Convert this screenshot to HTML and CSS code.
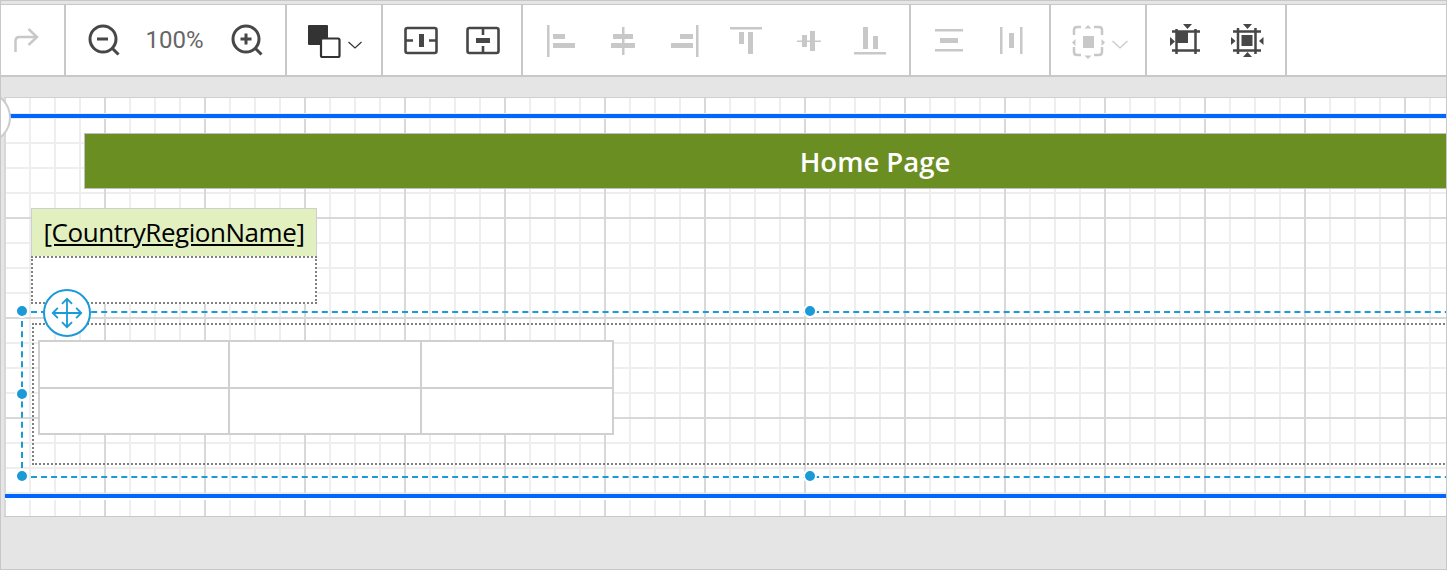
FILE: index.html
```html
<!DOCTYPE html>
<html lang="en">
<head>
<meta charset="utf-8">
<title>Report Designer</title>
<link rel="stylesheet" href="styles.css">
</head>
<body>
<div class="app">
  <div class="toolbar">
    <div class="group g1">
      <svg class="icon muted" viewBox="6 20 40 40"><path class="s25" d="M15.500 52V41q0-4 4-4H37M28.500 29l8.500 8-8.500 8"/></svg>
    </div>
    <div class="group g2">
      <svg class="icon dark" viewBox="83 20 40 40"><circle class="s27" cx="103" cy="39" r="13"/><path class="s27" d="M112.500 48.500l6 6M97 39h11"/></svg>
      <span class="zoom-value">100%</span>
      <svg class="icon dark" viewBox="226 20 40 40"><circle class="s27" cx="246" cy="39" r="13"/><path class="s27" d="M255.500 48.500l6 6M240.500 39h11M246 33.500v11"/></svg>
    </div>
    <div class="group g3">
      <svg class="icon wide ink" viewBox="300 20 70 40"><rect class="f" x="308" y="25" width="20" height="20" rx="1"/><rect class="box" x="321" y="38.500" width="18.500" height="18.500" rx="1.500"/><path class="chev" d="M348.500 42l6.500 6 6.500-6"/></svg>
    </div>
    <div class="group g4">
      <svg class="icon dark" viewBox="401 20 40 40"><rect class="s2" x="405.500" y="28" width="31" height="25" rx="2"/><path class="f" d="M419 34h5v13h-5z"/><path class="s2" d="M405 40.500h8M429 40.500h8"/></svg>
      <svg class="icon dark" viewBox="463 20 40 40"><rect class="s2" x="467.500" y="28" width="31" height="25" rx="2"/><path class="f" d="M476 38h14v5h-14z"/><path class="s2" d="M483 28v7M483 46v7"/></svg>
    </div>
    <div class="group g5">
      <svg class="icon muted" viewBox="541 20 40 40"><path class="f" d="M547 25h2.500v32H547zM553 34h12v5h-12zM553 43h22v5h-22z"/></svg>
      <svg class="icon muted" viewBox="603 20 40 40"><path class="f" d="M622 27h2.500v28H622zM613 34h20v5h-20zM611 43h24v5h-24z"/></svg>
      <svg class="icon muted" viewBox="665 20 40 40"><path class="f" d="M696 25h2.500v32H696zM680 34h13v5h-13zM671 43h22v5h-22z"/></svg>
      <svg class="icon muted" viewBox="727 20 40 40"><path class="f" d="M730 27h32v2.500h-32zM739 32h5v12h-5zM748 32h5v22h-5z"/></svg>
      <svg class="icon muted" viewBox="789 20 40 40"><path class="f" d="M797 40.500h24v1.500h-24zM802 35h5v12h-5zM810 31h5v20h-5z"/></svg>
      <svg class="icon muted" viewBox="851 20 40 40"><path class="f" d="M854 52h32v2.500h-32zM863 27h5v22h-5zM873 36h5v13h-5z"/></svg>
    </div>
    <div class="group g6">
      <svg class="icon muted" viewBox="929 20 40 40"><path class="f" d="M935 29h28v2.500h-28zM935 49h28v2.500h-28zM940 38h18v5h-18z"/></svg>
      <svg class="icon muted" viewBox="991 20 40 40"><path class="f" d="M1000 27h2.500v27H1000zM1020 27h2.500v27H1020zM1009 33h5v15h-5z"/></svg>
    </div>
    <div class="group g7">
      <svg class="icon wide muted" viewBox="1065 20 70 40"><path class="s25" d="M1074 35v-5q0-3 3-3h4M1094 27h5q3 0 3 3v5M1102 47v5q0 3-3 3h-5M1081 55h-4q-3 0-3-3v-5"/><path class="f" d="M1083 36h11v12h-11zM1088 25l3.500 3.500h-7zM1088 59l3.500-3.500h-7zM1072 42.500l3.500-3.500v7zM1105 42.500l-3.500-3.500v7z"/><path class="chev" d="M1112.500 41l7.500 7 7.500-7"/></svg>
    </div>
    <div class="group g8">
      <svg class="icon dark" viewBox="1165 20 40 40"><path class="s25" d="M1172 31.500h28M1172 50.500h28M1176.500 29v25M1195.500 29v25"/><path class="f" d="M1177 31h11v12h-11zM1183 24h9l-4.500 5zM1170 37l5 4.500-5 4.500z"/></svg>
      <svg class="icon dark" viewBox="1227 20 40 40"><path class="s25" d="M1233 31.500h28M1233 50.500h28M1238 28v26M1255.500 28v26"/><path class="f" d="M1241.500 35h11v11h-11zM1243 24h9l-4.500 5zM1243 57h9l-4.500-5zM1231 37l4.500 4-4.500 4zM1263.500 37l-4.500 4 4.500 4z"/></svg>
    </div>
    <div class="toolbar-rest"></div>
  </div>
  <div class="workspace">
    <div class="canvas">
      <div class="margin margin-top"></div>
      <div class="margin margin-bottom"></div>
      <div class="banner">Home Page</div>
      <div class="field-title"><span class="field-text">[CountryRegionName]</span></div>
      <div class="field-body"></div>
      <div class="panel"></div>
      <div class="data-table">
        <div class="cell"></div><div class="cell"></div><div class="cell"></div>
        <div class="cell"></div><div class="cell"></div><div class="cell"></div>
      </div>
      <div class="selection"></div>
      <span class="handle h-tl"></span>
      <span class="handle h-tm"></span>
      <span class="handle h-ml"></span>
      <span class="handle h-bl"></span>
      <span class="handle h-bm"></span>
      <div class="move">
        <svg viewBox="0 0 48 48"><path d="M24 9v30M9 24h30M18.500 14L24 8.500l5.500 5.500M18.500 34L24 39.500l5.500-5.500M14 18.500L8.500 24l5.500 5.500M34 18.500l5.500 5.500-5.500 5.500"/></svg>
      </div>
    </div>
    <svg class="corner" viewBox="0 0 10 42"><circle cx="-16" cy="20.500" r="25"/></svg>
  </div>
</div>
</body>
</html>
```

FILE: styles.css
```css
* { box-sizing: border-box; }
html, body { margin: 0; padding: 0; background: #fff; }
.app {
  width: 1447px;
  height: 570px;
  border: 1px solid #c8c8c8;
  display: flex;
  flex-direction: column;
  overflow: hidden;
  background: #e5e5e5;
}
.toolbar {
  margin-top: 3px;
  height: 73px;
  flex: none;
  display: flex;
  background: #fff;
  border-top: 1px solid #c8c8c8;
  border-bottom: 2px solid #c8c8c8;
}
.group {
  display: flex;
  align-items: center;
  gap: 22px;
  padding-left: 18px;
  border-right: 2px solid #c8c8c8;
  flex: none;
}
.g1 { width: 65px; padding-left: 5px; }
.g2 { width: 221px; padding: 0 19px 0 17px; gap: 0; }
.g3 { width: 96px; padding-left: 13px; }
.g4 { width: 140px; }
.g5 { width: 388px; }
.g6 { width: 140px; }
.g7 { width: 96px; padding-left: 14px; }
.g8 { width: 140px; }
.toolbar-rest { flex: 1; }
.icon { width: 40px; height: 40px; flex: none; fill: none; overflow: hidden; }
.icon.wide { width: 70px; }
.icon .f { stroke: none; }
.icon.dark { color: #474747; }
.icon.ink { color: #333; }
.icon.muted { color: #c8c8c8; }
.f { fill: currentColor; }
.s2, .s25, .s27, .chev, .box { fill: none; stroke: currentColor; }
.s2 { stroke-width: 2.600px; }
.s25 { stroke-width: 2.500px; }
.s27 { stroke-width: 3px; }
.box { stroke-width: 2.200px; fill: #fff; stroke: #333; }
.chev { stroke-width: 1.200px; }
.zoom-value {
  flex: 1;
  text-align: center;
  font: 400 24px/1 Roboto, "Liberation Sans", sans-serif;
  color: #666;
}
.workspace {
  position: relative;
  flex: 1;
  padding: 20px 0 0 3px;
}
.canvas {
  position: relative;
  width: 1442px;
  height: 420px;
  overflow: hidden;
  background-color: #fff;
  background-image:
    linear-gradient(90deg, #d8d8d8 2px, transparent 2px),
    linear-gradient(180deg, #d8d8d8 2px, transparent 2px),
    linear-gradient(90deg, #eeeeee 2px, transparent 2px),
    linear-gradient(180deg, #eeeeee 2px, transparent 2px);
  background-size: 100px 100px, 100px 100px, 25px 25px, 25px 25px;
  background-position: 0 0, 0 19px, 0 0, 0 19px;
  border-top: 1px solid #d0d0d0;
  border-bottom: 1px solid #c8c8c8;
}
.corner {
  position: absolute;
  left: 0;
  top: 20px;
  width: 10px;
  height: 42px;
}
.corner circle { fill: #fff; stroke: #cccccc; stroke-width: 2px; }
.margin { position: absolute; right: 0; height: 4px; background: #0066ff; }
.margin-top { left: 6px; top: 16px; box-shadow: 0 1px 0 #eee, 0 -1px 0 #eee; }
.margin-bottom { left: 1px; top: 396px; box-shadow: 0 2px 0 #fff, 0 -1px 0 #eee; }
.banner {
  position: absolute;
  left: 80px;
  top: 35px;
  width: 1582px;
  height: 56px;
  padding-top: 1px;
  display: flex;
  align-items: center;
  justify-content: center;
  background: #6b8e23;
  border: 1px solid #c0c0c0;
  color: #fff;
  font: 600 27.500px/1 "Open Sans", "Noto Sans", sans-serif;
}
.field-title {
  position: absolute;
  left: 27px;
  top: 110px;
  width: 286px;
  height: 49px;
  padding-bottom: 2px;
  background: #e2f0c0;
  border: 1px solid #cfcfcf;
  display: flex;
  align-items: center;
  justify-content: center;
  color: #000;
  font: 400 26px/1 "Open Sans", "Noto Sans", sans-serif;
}
.field-text { text-decoration: underline; letter-spacing: -0.450px; }
.field-body {
  position: absolute;
  left: 27px;
  top: 158px;
  width: 286px;
  height: 48px;
  background: #fff;
  border: 2px dotted #808080;
}
.panel {
  position: absolute;
  left: 28px;
  top: 225px;
  width: 1500px;
  height: 142px;
  border: 2px dotted #808080;
}
.data-table {
  position: absolute;
  left: 34px;
  top: 242px;
  width: 576px;
  height: 95px;
  display: grid;
  grid-template-columns: 190px 192px 1fr;
  grid-template-rows: 47px 1fr;
  background: #fff;
  border: 2px solid #d0d0d0;
}
.cell {
  border-right: 2px solid #d0d0d0;
  border-bottom: 2px solid #d0d0d0;
}
.cell:nth-child(3n) { border-right: 0; }
.cell:nth-child(n+4) { border-bottom: 0; }
.selection {
  position: absolute;
  left: 17px;
  top: 213px;
  width: 1500px;
  height: 167px;
  border: 2px dashed #1a9ad6;
}
.handle {
  position: absolute;
  width: 14px;
  height: 14px;
  border-radius: 50%;
  background: #1a9ad6;
  border: 2px solid #fff;
}
.h-tl { left: 11px; top: 206px; }
.h-tm { left: 799px; top: 206px; }
.h-ml { left: 11px; top: 289px; }
.h-bl { left: 11px; top: 371px; }
.h-bm { left: 799px; top: 371px; }
.move {
  position: absolute;
  left: 39px;
  top: 191px;
  width: 48px;
  height: 48px;
  border-radius: 50%;
  background: #fff;
  border: 2px solid #1a9ad6;
  display: flex;
  align-items: center;
  justify-content: center;
}
.move svg {
  width: 44px;
  height: 44px;
  fill: none;
  stroke: #1a9ad6;
  stroke-width: 2px;
}
```
